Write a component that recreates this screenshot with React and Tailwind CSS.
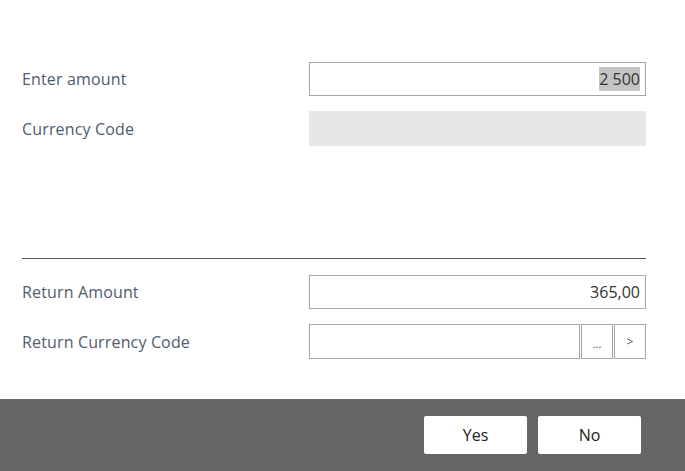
const FONT = { fontFamily: '"Open Sans", "Noto Sans", sans-serif' };

function Row({ label, children, className = "" }) {
  return (
    <div className={`flex items-center ${className}`}>
      <div className="w-[287px] text-[16px] text-[#505c6d] tracking-[0.15px]">{label}</div>
      <div className="flex-1">{children}</div>
    </div>
  );
}

export default function App() {
  return (
    <div className="w-[685px] h-[471px] bg-white flex flex-col" style={FONT}>
      <div className="flex-1 pl-[22px] pr-[39px] pt-[62px]">
        <Row label="Enter amount">
          <div className="h-[34px] border border-[#a6a6a6] bg-white flex items-center justify-end pr-[5px] text-[16px] text-[#333]">
            <span className="bg-[#c4c4c4]">2 500</span>
          </div>
        </Row>
        <Row label="Currency Code" className="mt-[15px]">
          <div className="h-[35px] bg-[#e6e7e8]" />
        </Row>

        <div className="mt-[112px] border-t border-[#4f5b6b]" />

        <Row label="Return Amount" className="mt-[16px]">
          <div className="h-[34px] border border-[#a6a6a6] bg-white flex items-center justify-end pr-[5px] text-[16px] text-[#333]">
            365,00
          </div>
        </Row>
        <Row label="Return Currency Code" className="mt-[15px]">
          <div className="flex h-[35px] gap-[1px]">
            <div className="flex-1 border border-[#a6a6a6] bg-white" />
            <button className="w-[32px] border border-[#a6a6a6] bg-white text-[11px] text-[#555] flex items-end justify-center pb-[6px]">
              ...
            </button>
            <button className="w-[32px] border border-[#a6a6a6] bg-white text-[12px] text-[#555] flex items-center justify-center">
              &gt;
            </button>
          </div>
        </Row>
      </div>
      <div className="h-[72px] bg-[#666666] flex items-center justify-end gap-[11px] pr-[44px]">
        <button className="w-[103px] h-[38px] bg-white rounded-[2px] text-[16px] text-[#222]">Yes</button>
        <button className="w-[103px] h-[38px] bg-white rounded-[2px] text-[16px] text-[#222]">No</button>
      </div>
    </div>
  );
}
